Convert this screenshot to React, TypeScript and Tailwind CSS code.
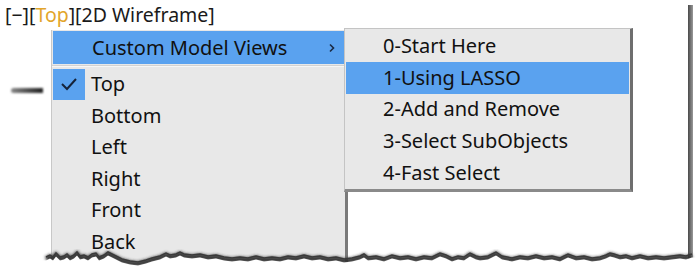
import React from "react";

const FONT = { fontFamily: '"Noto Sans", "Open Sans", sans-serif' };

const mainItems = ["Bottom", "Left", "Right", "Front", "Back"];
const subItems = ["0-Start Here", "1-Using LASSO", "2-Add and Remove", "3-Select SubObjects", "4-Fast Select"];

// jagged torn-paper edge points
const tear: [number, number][] = [
  [46, 257], [50, 255], [53, 257], [56, 253], [60, 257], [64, 256], [67, 254], [70, 257], [74, 255], [77, 252], [80, 256], [84, 255], [88, 257], [92, 254],
  [96, 253], [99, 257], [104, 255], [108, 252], [112, 254], [116, 256], [122, 259], [130, 261], [138, 262], [146, 260], [152, 258],
  [160, 256], [166, 253], [170, 255], [176, 254], [180, 252], [184, 254], [192, 255], [200, 254], [208, 256], [216, 255], [224, 257],
  [232, 258], [240, 257], [248, 258], [256, 256], [264, 258], [272, 257], [280, 258], [288, 256], [296, 257],
  [304, 255], [312, 257], [320, 256], [328, 258], [336, 257], [344, 259], [352, 258], [360, 256], [364, 254], [368, 257],
  [376, 256], [384, 258], [392, 255], [400, 257], [408, 256], [416, 258], [424, 256], [432, 257], [440, 253],
  [446, 255], [452, 258], [458, 256], [464, 257], [470, 253], [476, 256], [480, 257], [488, 256], [496, 252], [502, 256], [512, 258],
  [520, 256], [528, 257], [536, 255], [544, 257], [552, 256], [560, 258], [568, 254], [576, 257], [584, 256],
  [592, 258], [600, 257], [606, 255], [610, 253], [614, 254], [620, 256], [626, 255], [632, 257], [640, 255], [648, 257],
  [656, 256], [664, 257], [672, 256], [680, 255], [686, 256], [692, 254],
];
const tearLine = "M" + tear.map(([x, y]) => `${x} ${y}`).join(" L");
const tearFill = tearLine + " L697 254 L697 272 L0 272 L0 258 L46 257 Z";

export default function App() {
  return (
    <div className="relative w-[697px] h-[272px] bg-white overflow-hidden pl-[5px] pt-[2px]" style={FONT}>
      {/* header */}
      <div className="text-[19.5px] leading-[25px] text-[#1a1a1a] whitespace-nowrap">
        [−][<span className="text-[#e2a52a]">Top</span>][2D Wireframe]
      </div>

      {/* left shadow fragment */}
      <div className="absolute left-[11px] top-[88px] w-[32px] h-[5px] bg-gradient-to-r from-[#888] to-[#222] blur-[1px] rounded-l-full" />

      {/* viewport right frame */}
      <div className="absolute left-[688px] top-[5px] w-[5px] h-[256px] bg-gradient-to-r from-[#4a4a4a] to-[#9a9a9a]" />

      {/* main menu */}
      <div className="absolute left-[51px] top-[30px] w-[297px] h-[232px] bg-[#e8e8e8] border-l border-[#c8c8c8] border-r-[3px] border-r-[#7a7a7a] flex flex-col">
        <div className="flex items-center h-[33px] mx-[1px] mt-[1px] bg-[#5aa2ef] text-[20px] text-[#111]">
          <span className="ml-[39px]">Custom Model Views</span>
          <svg className="ml-auto mr-[9px]" width="6" height="10" viewBox="0 0 6 10">
            <path d="M1 1.5 L4.5 5 L1 8.5" fill="none" stroke="#1b2a44" strokeWidth="1.6" />
          </svg>
        </div>
        <div className="h-[1px] mt-[1px] bg-[#d2d2d2]" />
        <div className="h-[1px] bg-[#f6f6f6]" />
        <div className="flex items-center h-[32px] mt-[1px]">
          <div className="w-[32px] h-[31px] ml-[1px] bg-[#5aa2ef] flex items-center justify-center">
            <svg width="18" height="14" viewBox="0 0 18 14">
              <path d="M2 7 L7 12 L16 2" fill="none" stroke="#15233a" strokeWidth="2" />
            </svg>
          </div>
          <span className="ml-[6px] text-[20px] text-[#111]">Top</span>
        </div>
        {mainItems.map((t) => (
          <div key={t} className="flex items-center h-[31.5px] text-[20px] text-[#111]">
            <span className="ml-[39px]">{t}</span>
          </div>
        ))}
      </div>

      {/* sub menu */}
      <div className="absolute left-[344px] top-[28px] w-[289px] h-[164px] bg-[#e8e8e8] border border-[#c4c4c4] border-r-[3px] border-r-[#6e6e6e] border-b-[3px] border-b-[#8a8a8a] pt-[1px] flex flex-col">
        {subItems.map((t, i) => (
          <div
            key={t}
            className={
              i === 1
                ? "flex items-center h-[32px] mx-[1px] bg-[#5aa2ef] text-[20px] text-[#111]"
                : "flex items-center h-[32px] mx-[1px] text-[20px] text-[#111]"
            }
          >
            <span className="ml-[37px]">{t}</span>
          </div>
        ))}
      </div>

      {/* torn edge */}
      <svg className="absolute left-0 top-0" width="697" height="272" viewBox="0 0 697 272">
        <defs>
          <filter id="bl" x="-5%" y="-50%" width="110%" height="200%">
            <feGaussianBlur stdDeviation="1.5" />
          </filter>
        </defs>
        <path d={tearLine} fill="none" stroke="#333" strokeWidth="5" filter="url(#bl)" transform="translate(0 2)" />
        <path d={tearFill} fill="#ffffff" transform="translate(0 3.5)" />
        <path d={tearLine} fill="none" stroke="#3a3a3a" strokeWidth="1.5" />
      </svg>
    </div>
  );
}
